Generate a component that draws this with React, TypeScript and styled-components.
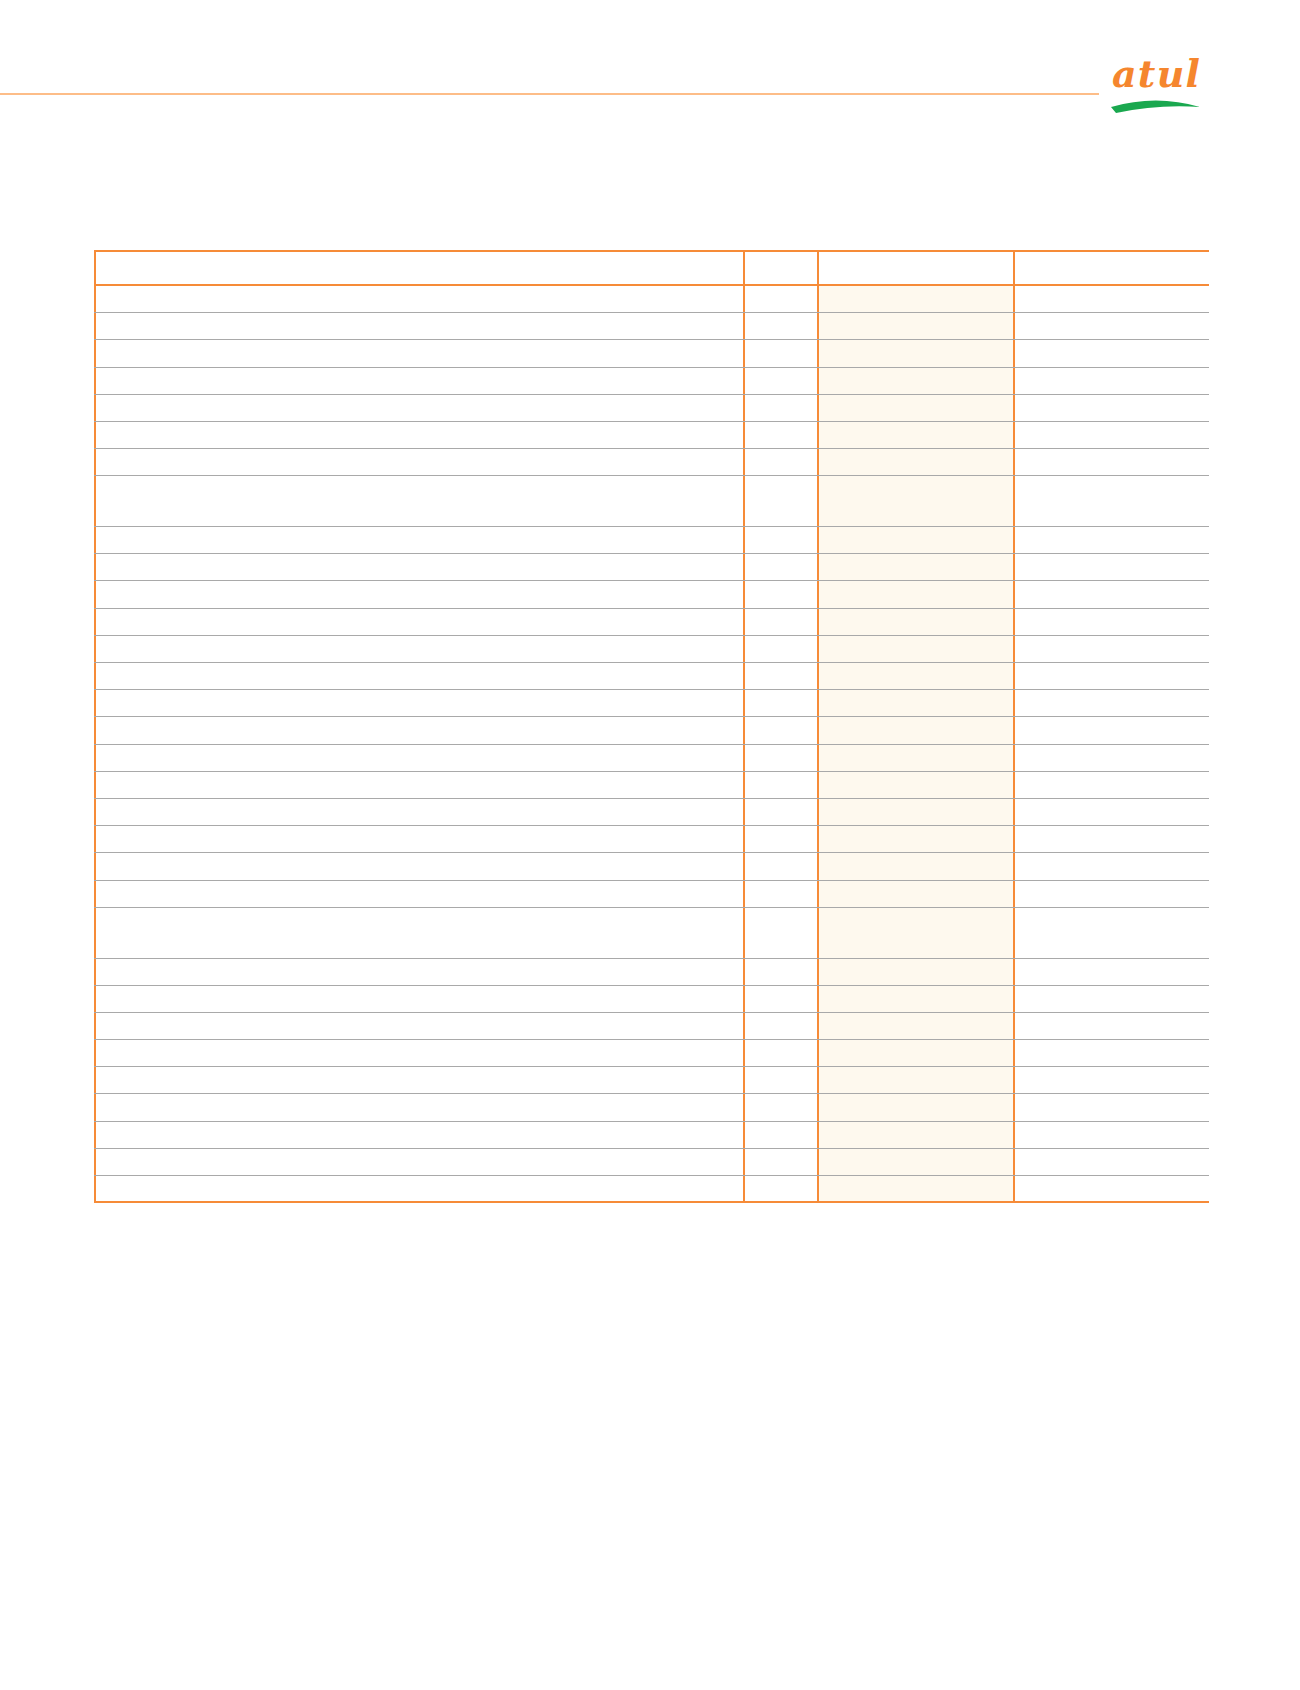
import React from "react";
import styled, { createGlobalStyle } from "styled-components";

const Global = createGlobalStyle`
  html, body { margin: 0; padding: 0; background: #ffffff; }
  body { font-family: "Liberation Sans", Arial, sans-serif; }
`;

const ORANGE = "#f68b38";
const GREY = "#a9a9a9";
const CREAM = "#fef9ee";
const COLS = "649px 74px 196px 196px";

const Page = styled.div`
  width: 1300px;
  min-height: 1690px;
  position: relative;
`;

const TopBar = styled.header`
  display: flex;
  align-items: flex-start;
  height: 130px;
`;

const Rule = styled.div`
  flex: 0 0 1099px;
  height: 2px;
  margin-top: 93px;
  background: #fdbd88;
`;

const LogoBox = styled.svg`
  flex: 0 0 auto;
  margin-left: 5px;
  margin-top: 52px;
  display: block;
`;

const Table = styled.div`
  margin-left: 94px;
  margin-top: 120px;
  width: 1115px;
  border-top: 2px solid ${ORANGE};
`;

const Row = styled.div<{ $h: number; $head?: boolean; $last?: boolean }>`
  display: grid;
  grid-template-columns: ${COLS};
  box-sizing: border-box;
  height: ${(p) => p.$h}px;
  border-bottom: ${(p) =>
    p.$head || p.$last ? `2px solid ${ORANGE}` : `1px solid ${GREY}`};
`;

const Cell = styled.div<{ $shade?: boolean }>`
  border-left: 2px solid ${ORANGE};
  background: ${(p) => (p.$shade ? CREAM : "transparent")};
  font-size: 12px;
  color: #333;
`;

function Logo() {
  return (
    <LogoBox width="110" height="64" viewBox="0 0 110 64">
      <text
        x="8"
        y="35"
        textLength="88"
        lengthAdjust="spacing"
        fill="#f5862e"
        fontFamily="'DejaVu Serif', serif"
        fontStyle="italic"
        fontWeight="700"
        fontSize="38"
      >
        atul
      </text>
      <path d="M7 55 Q52 42 96 55 Q54 52 12 61 Z" fill="#1aa84f" />
    </LogoBox>
  );
}

const layout: number[] = [];
for (let i = 0; i < 7; i++) layout.push(27.2);
layout.push(50.8);
for (let i = 0; i < 14; i++) layout.push(27.2);
layout.push(50.8);
for (let i = 0; i < 9; i++) layout.push(27.2);

export default function App() {
  return (
    <Page>
      <Global />
      <TopBar>
        <Rule />
        <Logo />
      </TopBar>
      <Table>
        <Row $h={34} $head>
          <Cell />
          <Cell />
          <Cell />
          <Cell />
        </Row>
        {layout.map((h, i) => (
          <Row key={i} $h={h} $last={i === layout.length - 1}>
            <Cell />
            <Cell />
            <Cell $shade />
            <Cell />
          </Row>
        ))}
      </Table>
    </Page>
  );
}
